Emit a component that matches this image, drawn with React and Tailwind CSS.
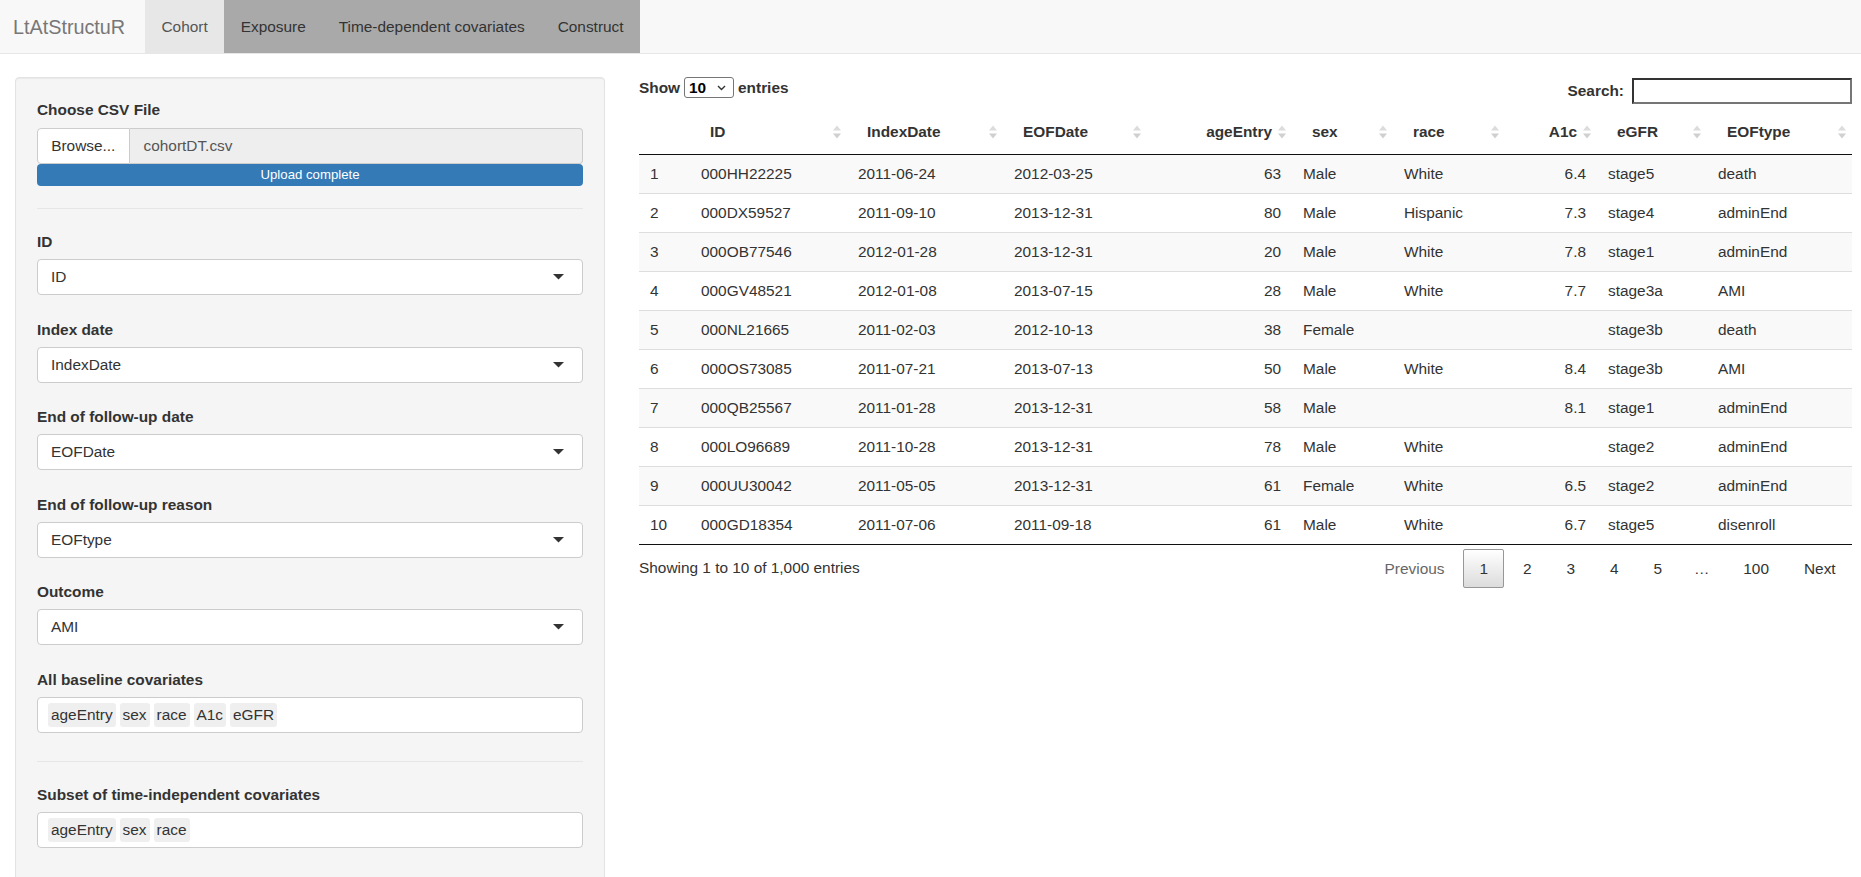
import React from "react";

const cols = [
  { w: 51 },
  { w: 157, label: "ID" },
  { w: 156, label: "IndexDate" },
  { w: 144, label: "EOFDate" },
  { w: 145, label: "ageEntry", right: true },
  { w: 101, label: "sex" },
  { w: 112, label: "race" },
  { w: 92, label: "A1c", right: true },
  { w: 110, label: "eGFR" },
  { w: 145, label: "EOFtype" },
];

const rows = [
  ["1", "000HH22225", "2011-06-24", "2012-03-25", "63", "Male", "White", "6.4", "stage5", "death"],
  ["2", "000DX59527", "2011-09-10", "2013-12-31", "80", "Male", "Hispanic", "7.3", "stage4", "adminEnd"],
  ["3", "000OB77546", "2012-01-28", "2013-12-31", "20", "Male", "White", "7.8", "stage1", "adminEnd"],
  ["4", "000GV48521", "2012-01-08", "2013-07-15", "28", "Male", "White", "7.7", "stage3a", "AMI"],
  ["5", "000NL21665", "2011-02-03", "2012-10-13", "38", "Female", "", "", "stage3b", "death"],
  ["6", "000OS73085", "2011-07-21", "2013-07-13", "50", "Male", "White", "8.4", "stage3b", "AMI"],
  ["7", "000QB25567", "2011-01-28", "2013-12-31", "58", "Male", "", "8.1", "stage1", "adminEnd"],
  ["8", "000LO96689", "2011-10-28", "2013-12-31", "78", "Male", "White", "", "stage2", "adminEnd"],
  ["9", "000UU30042", "2011-05-05", "2013-12-31", "61", "Female", "White", "6.5", "stage2", "adminEnd"],
  ["10", "000GD18354", "2011-07-06", "2011-09-18", "61", "Male", "White", "6.7", "stage5", "disenroll"],
];

const gridCols =
  "grid grid-cols-[51px_157px_156px_144px_145px_101px_112px_92px_110px_145px]";

function SortIcon() {
  return (
    <svg width="8" height="14" viewBox="0 0 8 14" className="absolute right-[6px] top-1/2 -translate-y-1/2">
      <path d="M0 5.5 L4 0.5 L8 5.5 Z" fill="#dcdcdc" />
      <path d="M0 8.5 L8 8.5 L4 13.5 Z" fill="#d0d0d0" />
    </svg>
  );
}

function Caret() {
  return (
    <svg width="11" height="6" viewBox="0 0 11 6">
      <path d="M0 0 H11 L5.5 5.5 Z" fill="#333" />
    </svg>
  );
}

function Label({ children }) {
  return <div className="font-bold leading-[22px] text-[#333]">{children}</div>;
}

function SelectField({ label, value }) {
  return (
    <div className="mb-[23.5px]">
      <Label>{label}</Label>
      <div className="mt-[6px] h-[36px] bg-white border border-[#cccccc] rounded-[4px] flex items-center justify-between pl-[13px] pr-[18px]">
        <span className="leading-[22px]">{value}</span>
        <Caret />
      </div>
    </div>
  );
}

function MultiField({ label, tags }) {
  return (
    <div>
      <Label>{label}</Label>
      <div className="mt-[6px] h-[36px] bg-white border border-[#cccccc] rounded-[4px] flex items-center gap-[4px] pl-[10px]">
        {tags.map((t) => (
          <span key={t} className="h-[24px] leading-[24px] px-[3px] bg-[#efefef] rounded-[3px] text-[#333]">
            {t}
          </span>
        ))}
      </div>
    </div>
  );
}

function PageBtn({ children, current, disabled, className = "" }) {
  return (
    <span
      className={
        "ml-[2.2px] px-[15.4px] py-[7.7px] leading-[22px] border rounded-[2px] " +
        (current
          ? "border-[#979797] bg-gradient-to-b from-white to-[#dcdcdc] text-[#333] "
          : "border-transparent ") +
        (disabled ? "text-[#666] " : "text-[#333] ") +
        className
      }
    >
      {children}
    </span>
  );
}

export default function App() {
  return (
    <div className="h-screen overflow-hidden bg-white text-[#333] text-[15.4px] leading-[22px] font-['Liberation_Sans',Arial,sans-serif]">
      {/* Navbar */}
      <nav className="h-[54px] bg-[#f8f8f8] border-b border-[#e7e7e7] flex">
        <div className="w-[145px] pl-[13px] flex items-center text-[19.8px] text-[#777]">LtAtStructuR</div>
        <div className="px-[16.5px] flex items-center bg-[#e7e7e7] text-[#555]">Cohort</div>
        <div className="px-[16.5px] flex items-center bg-[#a9a9a9] text-[#333]">Exposure</div>
        <div className="px-[16.5px] flex items-center bg-[#a9a9a9] text-[#333]">Time-dependent covariates</div>
        <div className="px-[16.5px] flex items-center bg-[#a9a9a9] text-[#333]">Construct</div>
      </nav>

      <div className="flex pt-[23px]">
        {/* Sidebar */}
        <div className="ml-[15px] w-[590px] shrink-0 bg-[#f5f5f5] border border-[#e3e3e3] rounded-[4px] shadow-[inset_0_1px_1px_rgba(0,0,0,0.05)] px-[21px] pt-[21px] pb-[40px]">
          <Label>Choose CSV File</Label>
          <div className="mt-[7px] flex h-[36px]">
            <div className="px-[13.2px] bg-white border border-[#cccccc] rounded-l-[4px] flex items-center text-[#333]">
              Browse...
            </div>
            <div className="flex-1 bg-[#eeeeee] border border-l-0 border-[#cccccc] rounded-r-[4px] flex items-center pl-[14px] text-[#555]">
              cohortDT.csv
            </div>
          </div>
          <div className="h-[22px] bg-[#337ab7] rounded-[4px] text-white text-[13.2px] leading-[22px] text-center">
            Upload complete
          </div>
          <div className="mt-[22px] mb-[22px] h-px bg-[#e6e6e6]" />

          <SelectField label="ID" value="ID" />
          <SelectField label="Index date" value="IndexDate" />
          <SelectField label="End of follow-up date" value="EOFDate" />
          <SelectField label="End of follow-up reason" value="EOFtype" />
          <SelectField label="Outcome" value="AMI" />
          <MultiField label="All baseline covariates" tags={["ageEntry", "sex", "race", "A1c", "eGFR"]} />
          <div className="mt-[28.5px] mb-[22px] h-px bg-[#e6e6e6]" />
          <MultiField label="Subset of time-independent covariates" tags={["ageEntry", "sex", "race"]} />
        </div>

        {/* Main */}
        <div className="ml-[34px] w-[1213px] shrink-0">
          <div className="h-[33px] flex justify-between items-start">
            <div className="h-[21px] flex items-center font-bold">
              <span>Show</span>
              <div className="ml-[4px] w-[50px] h-[21px] border border-[#767676] rounded-[3px] bg-white flex items-center justify-between pl-[4px] pr-[7px] text-black">
                <span className="leading-[19px]">10</span>
                <svg width="9" height="6" viewBox="0 0 9 6">
                  <path d="M1 1 L4.5 4.5 L8 1" fill="none" stroke="#333" strokeWidth="1.4" />
                </svg>
              </div>
              <span className="ml-[4px]">entries</span>
            </div>
            <div className="mt-[1px] h-[26px] flex items-center font-bold">
              <span>Search:</span>
              <div className="ml-[8px] w-[220px] h-[26px] bg-white border-2 border-t-[#333] border-l-[#333] border-r-[#767676] border-b-[#767676]" />
            </div>
          </div>

          {/* Header */}
          <div className={gridCols + " h-[45px] border-b border-[#111]"}>
            {cols.map((c, i) => (
              <div
                key={i}
                className={
                  "relative flex items-center px-[20px] font-bold " + (c.right ? "justify-end" : "justify-start")
                }
              >
                {c.label && <span>{c.label}</span>}
                {c.label && <SortIcon />}
              </div>
            ))}
          </div>

          {/* Body */}
          {rows.map((r, ri) => (
            <div
              key={ri}
              className={
                gridCols +
                " h-[39px] border-b " +
                (ri === rows.length - 1 ? "border-[#111] " : "border-[#dddddd] ") +
                (ri % 2 === 0 ? "bg-[#f9f9f9]" : "bg-white")
              }
            >
              {r.map((v, ci) => (
                <div
                  key={ci}
                  className={
                    "flex items-center px-[11px] whitespace-nowrap " + (cols[ci].right ? "justify-end" : "justify-start")
                  }
                >
                  {v}
                </div>
              ))}
            </div>
          ))}

          {/* Footer */}
          <div className="flex justify-between items-start">
            <div className="pt-[11.5px] leading-[22px]">Showing 1 to 10 of 1,000 entries</div>
            <div className="pt-[4px] flex items-start">
              <PageBtn disabled>Previous</PageBtn>
              <PageBtn current>1</PageBtn>
              <PageBtn>2</PageBtn>
              <PageBtn>3</PageBtn>
              <PageBtn>4</PageBtn>
              <PageBtn>5</PageBtn>
              <span className="px-[15.4px] py-[8.7px] leading-[22px] text-[#333]">…</span>
              <PageBtn>100</PageBtn>
              <PageBtn>Next</PageBtn>
            </div>
          </div>
        </div>
      </div>
    </div>
  );
}
